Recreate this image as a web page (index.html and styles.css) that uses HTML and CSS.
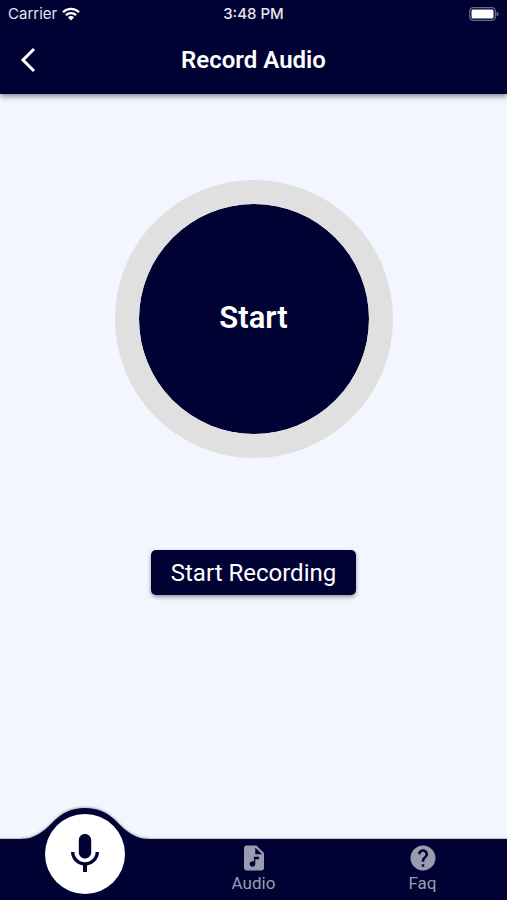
FILE: index.html
```html
<!DOCTYPE html>
<html lang="en">
<head>
<meta charset="utf-8">
<meta name="viewport" content="width=device-width, initial-scale=1">
<title>Record Audio</title>
<link rel="stylesheet" href="styles.css">
</head>
<body>
<header class="top">
  <div class="status">
    <div class="status-left">
      <span>Carrier</span>
      <svg class="wifi" viewBox="0 0 18 14" aria-hidden="true">
        <path d="M1 5.2C5.500 .7 12.500 .7 17 5.200M3.900 8.200C6.800 5.400 11.200 5.400 14.100 8.200" fill="none" stroke="currentColor" stroke-width="2.300"/>
        <path d="M5.900 10.300C7.600 8.700 10.400 8.700 12.100 10.300L9 13.500Z" fill="currentColor"/>
      </svg>
    </div>
    <span class="time">3:48 PM</span>
    <div class="status-right">
      <svg class="battery" viewBox="0 0 30 14" aria-hidden="true">
        <rect x=".7" y=".7" width="25.600" height="12.600" rx="3.600" fill="none" stroke="#696b8a" stroke-width="1.300"/>
        <rect x="2.500" y="2.500" width="22" height="9" rx="1.500" fill="#fff"/>
        <path d="M27.500 4.600C30.400 5.600 30.400 8.400 27.500 9.400Z" fill="#696b8a"/>
      </svg>
    </div>
  </div>
  <div class="appbar">
    <button class="back" type="button" aria-label="Back">
      <svg viewBox="0 0 16 26" aria-hidden="true"><path d="M14 2L3 13L14 24" fill="none" stroke="currentColor" stroke-width="3"/></svg>
    </button>
    <h1>Record Audio</h1>
  </div>
</header>

<main>
  <button class="dial" type="button">Start</button>
  <button class="record" type="button">Start Recording</button>
</main>

<nav class="tabs">
  <a class="tab active" href="#record" aria-label="Record">
    <svg class="hump" viewBox="0 0 132 33" aria-hidden="true"><path d="M2 32C16 32 25 24 33 16C42 6 53 1 66 1C79 1 90 6 99 16C107 24 116 32 130 32V33H2Z" fill="#000233"/></svg>
    <span class="disc">
      <svg viewBox="0 0 24 24" aria-hidden="true"><path d="M12 14.300c1.660 0 3.100-1.340 3.100-3V5c0-1.660-1.440-3-3.100-3S8.900 3.340 8.900 5v6.300c0 1.660 1.440 3 3.100 3zm5.300-3.300c0 3-2.540 5.100-5.300 5.100S6.700 14 6.700 11H5c0 3.410 2.720 6.230 6 6.720V21h2v-3.280c3.280-.48 6-3.300 6-6.720h-1.700z" fill="currentColor"/></svg>
    </span>
  </a>
  <a class="tab" href="#audio">
    <svg class="icon" viewBox="0 0 24 24" aria-hidden="true"><path d="M14 2H6c-1.100 0-1.990.9-1.990 2L4 20c0 1.100.89 2 1.990 2H18c1.100 0 2-.9 2-2V8l-6-6zm2 11h-3v3.750c0 1.240-1.010 2.250-2.250 2.250S8.500 17.990 8.500 16.750s1.010-2.250 2.250-2.250c.46 0 .89.14 1.250.38V11h4v2zm-3-4V3.500L18.500 9H13z" fill="currentColor"/></svg>
    <span>Audio</span>
  </a>
  <a class="tab" href="#faq">
    <svg class="icon" viewBox="0 0 24 24" aria-hidden="true"><path d="M12 2C6.480 2 2 6.480 2 12s4.480 10 10 10 10-4.480 10-10S17.520 2 12 2zm1 17h-2v-2h2v2zm2.070-7.750l-.9.920C13.450 12.900 13 13.500 13 15h-2v-.5c0-1.100.45-2.100 1.170-2.830l1.240-1.260c.37-.36.59-.86.59-1.410 0-1.100-.9-2-2-2s-2 .9-2 2H8c0-2.210 1.790-4 4-4s4 1.790 4 4c0 .88-.36 1.680-.93 2.250z" fill="currentColor"/></svg>
    <span>Faq</span>
  </a>
</nav>
</body>
</html>
```
FILE: styles.css
```css
:root {
  --navy: #000233;
  --page: #f4f6ff;
  --muted: #9a9bb0;
}

* {
  box-sizing: border-box;
}

body {
  margin: 0;
  min-height: 100vh;
  display: flex;
  flex-direction: column;
  background: var(--page);
  font-family: Roboto, "Liberation Sans", sans-serif;
}

button {
  border: 0;
  padding: 0;
  background: none;
  color: #fff;
  font: inherit;
  cursor: pointer;
}

svg {
  display: block;
}

.top {
  background: var(--navy);
  color: #fff;
  box-shadow: 0 2px 6px rgba(0, 0, 0, 0.5);
}

.status {
  display: grid;
  grid-template-columns: 1fr auto 1fr;
  align-items: center;
  height: 28px;
  padding: 0 8px;
  font: 500 15px/28px Inter, "Liberation Sans", sans-serif;
  color: #e4e5ee;
}

.status-left {
  display: flex;
  align-items: center;
  gap: 5px;
  font-weight: 400;
}

.status-right {
  display: flex;
  justify-content: flex-end;
}

.wifi {
  width: 18px;
  height: 14px;
  color: #fff;
}

.battery {
  width: 30px;
  height: 14px;
}

.appbar {
  display: grid;
  grid-template-columns: 56px 1fr 56px;
  align-items: center;
  height: 66px;
  padding-bottom: 2px;
}

.back {
  display: flex;
  align-items: center;
  justify-content: center;
  height: 48px;
}

.back svg {
  width: 16px;
  height: 26px;
}

h1 {
  margin: 0;
  font-size: 24px;
  line-height: 32px;
  font-weight: 600;
  text-align: center;
}

main {
  flex: 1;
  display: flex;
  flex-direction: column;
  align-items: center;
  gap: 92px;
  padding: 86px 16px;
}

.dial {
  width: 278px;
  height: 278px;
  padding-bottom: 4px;
  border: 24px solid #e0e0e0;
  border-radius: 50%;
  background: var(--navy);
  background-clip: padding-box;
  font-size: 31px;
  font-weight: 600;
}

.record {
  height: 45px;
  padding: 0 20px;
  border-radius: 5px;
  background: var(--navy);
  box-shadow: 0 2px 4px rgba(0, 0, 0, 0.4);
  font-size: 24px;
}

.tabs {
  display: grid;
  grid-template-columns: repeat(3, 1fr);
  height: 61px;
  background: var(--navy);
  box-shadow: 0 0 2px rgba(0, 0, 0, 0.6);
}

.tab {
  position: relative;
  display: flex;
  flex-direction: column;
  align-items: center;
  padding-top: 4px;
  color: var(--muted);
  font-size: 17px;
  line-height: 20px;
  text-decoration: none;
}

.icon {
  width: 30px;
  height: 30px;
}

.hump {
  position: absolute;
  left: 50%;
  bottom: 60px;
  width: 132px;
  height: 33px;
  transform: translateX(-50%);
  filter: drop-shadow(0 -1px 1px rgba(0, 0, 0, 0.3));
}

.disc {
  position: absolute;
  left: 50%;
  bottom: 6px;
  display: flex;
  align-items: center;
  justify-content: center;
  width: 80px;
  height: 80px;
  border-radius: 50%;
  background: #fff;
  color: var(--navy);
  transform: translateX(-50%);
}

.disc svg {
  width: 48px;
  height: 48px;
}
```
